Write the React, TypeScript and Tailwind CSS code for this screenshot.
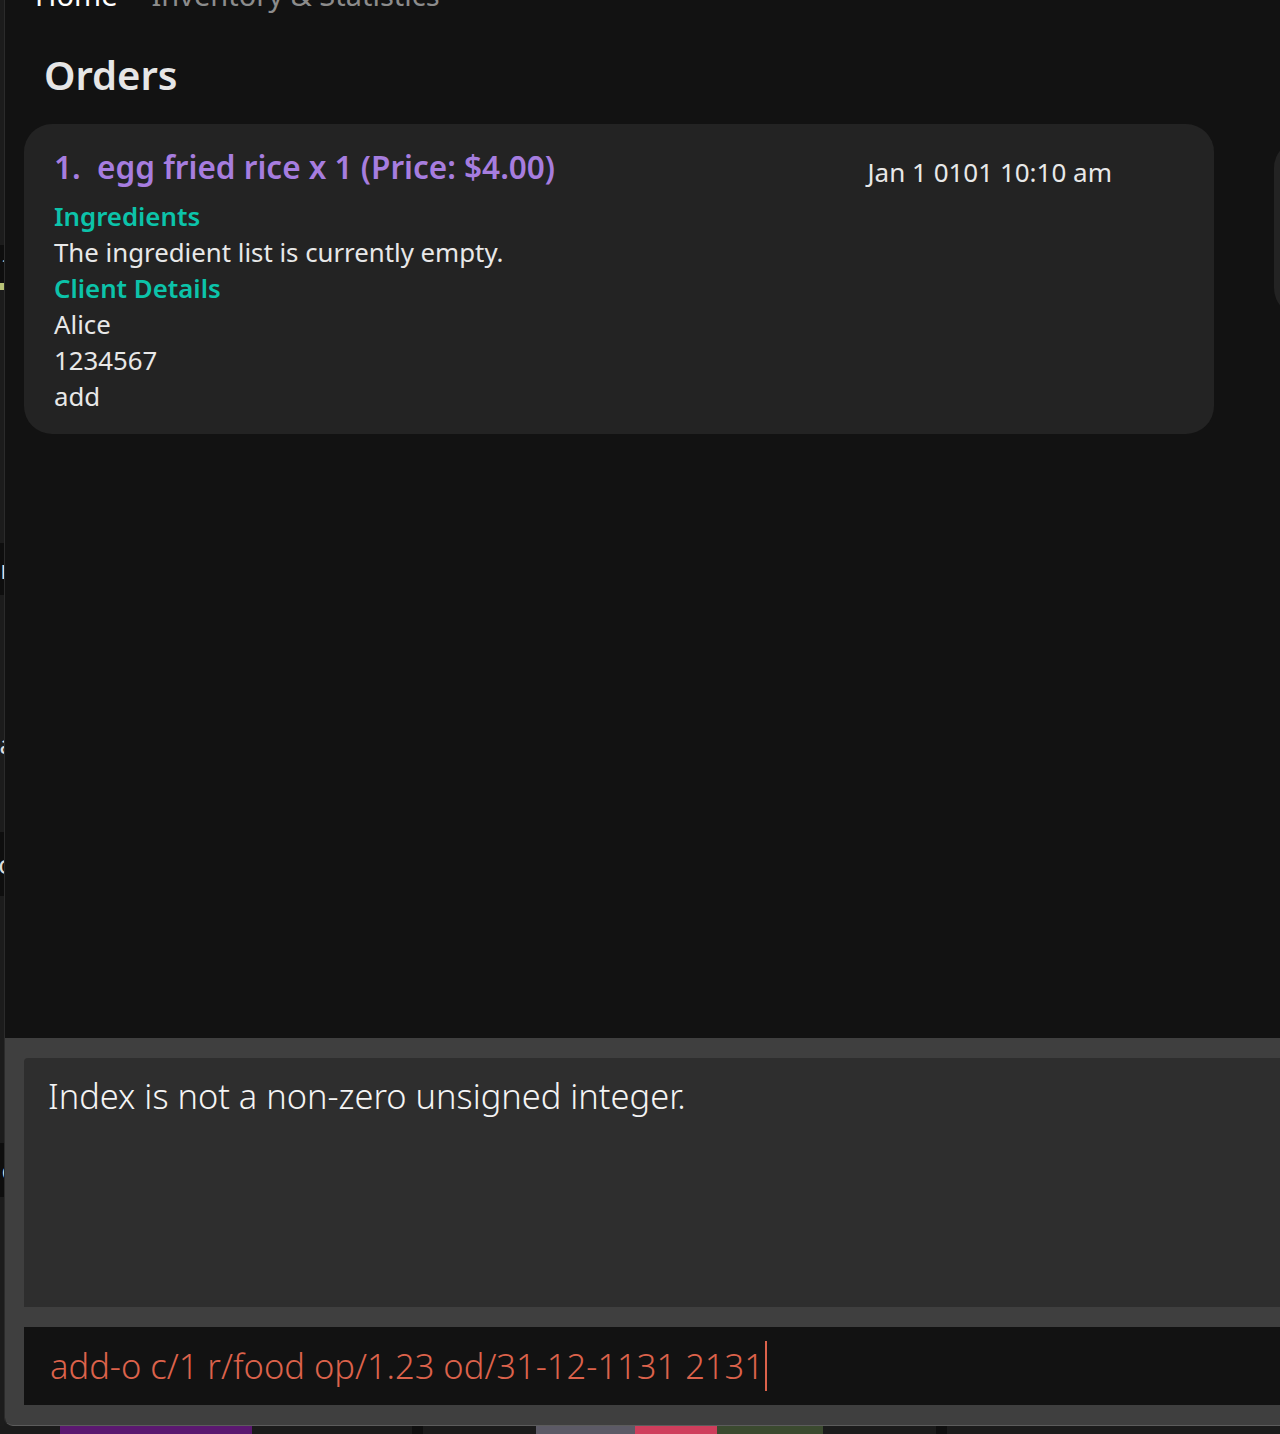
import React from "react";

const font = { fontFamily: '"Noto Sans", "Open Sans", sans-serif' };

function LeftStrip() {
  return (
    <div className="w-[4px] shrink-0 flex flex-col bg-[#1c1c1c] overflow-hidden text-[26px] leading-none text-[#dddddd]">
      <div className="h-[245px]" />
      <div className="h-[38px] bg-[#0e0e0e] flex items-center justify-end">
        <span className="-mr-[8px]">t</span>
      </div>
      <div className="h-[7px] bg-[#b7c176]" />
      <div className="h-[253px]" />
      <div className="h-[52px] bg-[#0e0e0e] flex items-center justify-end">
        <span className="-mr-[7px]">r</span>
      </div>
      <div className="h-[138px]" />
      <div className="h-[22px] flex items-center justify-end">
        <span className="-mr-[10px]">a</span>
      </div>
      <div className="h-[77px]" />
      <div className="h-[64px] bg-[#0e0e0e] flex items-center justify-end">
        <span className="-mr-[10px]">o</span>
      </div>
      <div className="h-[247px]" />
      <div className="h-[54px] bg-[#0e0e0e] flex items-center justify-end">
        <span className="-mr-[10px]">c</span>
      </div>
    </div>
  );
}

function OrderCard() {
  return (
    <div className="w-[1190px] shrink-0 rounded-[28px] bg-[#232323] pl-[30px] pr-[102px] pt-[21px] pb-[20px]">
      <div className="flex items-start justify-between">
        <div className="text-[31.5px] leading-[44px] font-semibold text-[#a67ddf] whitespace-pre">
          {"1.  egg fried rice x 1 (Price: $4.00)"}
        </div>
        <div className="text-[26px] leading-[36px] text-[#e8e8e8] mt-[9px]">
          Jan 1 0101 10:10 am
        </div>
      </div>
      <div className="text-[25.8px] leading-[36px] text-[#e8e8e8] mt-[8px]">
        <div className="font-semibold text-[#0cc3aa]">Ingredients</div>
        <div>The ingredient list is currently empty.</div>
        <div className="font-semibold text-[#0cc3aa]">Client Details</div>
        <div>Alice</div>
        <div>1234567</div>
        <div>add</div>
      </div>
    </div>
  );
}

function Window() {
  return (
    <div className="flex-1 min-w-0 flex flex-col bg-[#121212] border-l border-[#2b2b2b] overflow-hidden rounded-bl-[8px]">
      {/* Tabs (scrolled off the top) */}
      <div className="flex h-[29px] -mt-[20px] pl-[30px] gap-[34px] text-[29px] leading-none">
        <span className="text-white">Home</span>
        <span className="text-[#8c8c8c]">Inventory &amp; Statistics</span>
      </div>

      <div className="pl-[39px] pt-[42px] text-[40px] leading-[48px] font-semibold text-[#e6e6e6]">
        Orders
      </div>

      <div className="flex items-start gap-[60px] pl-[19px] pt-[25px]">
        <OrderCard />
        <div className="w-[60px] h-[176px] mt-[16px] shrink-0 rounded-[28px] bg-[#232323]" />
      </div>

      <div className="flex-1" />

      {/* Bottom command panel */}
      <div className="h-[388px] shrink-0 bg-[#3f3f3f] border-b border-[#5c5c5c] pl-[19px] pt-[20px] pb-[19px] flex flex-col gap-[20px] rounded-bl-[8px]">
        <div className="h-[249px] bg-[#2e2e2e] rounded-tl-[4px] pl-[24px] pt-[14px] text-[34.4px] leading-[48px] font-light text-[#f4f4f4]">
          Index is not a non-zero unsigned integer.
        </div>
        <div className="h-[78px] bg-[#121212] pl-[26px] flex items-center text-[34.5px] font-light text-[#dc624b]">
          <span className="whitespace-pre leading-none">add-o c/1 r/food op/1.23 od/31-12-1131 2131</span>
          <span className="w-[2px] h-[50px] bg-[#dc624b] ml-[1px]" />
        </div>
      </div>
    </div>
  );
}

function DesktopStrip() {
  return (
    <div className="h-[8px] flex bg-[#1b1b1b]">
      <div className="w-[60px]" />
      <div className="w-[192px] bg-[#5b1870]" />
      <div className="w-[160px]" />
      <div className="w-[11px] bg-[#0f0f0f]" />
      <div className="w-[113px]" />
      <div className="w-[99px] bg-[#5c5a66]" />
      <div className="w-[82px] bg-[#cf3e5c]" />
      <div className="w-[106px] bg-[#3b4a2f]" />
      <div className="w-[113px]" />
      <div className="w-[11px] bg-[#0f0f0f]" />
    </div>
  );
}

export default function App() {
  return (
    <div style={font} className="w-[1280px] h-[1434px] flex flex-col bg-[#1b1b1b] overflow-hidden">
      <div className="h-[1426px] flex">
        <LeftStrip />
        <Window />
      </div>
      <DesktopStrip />
    </div>
  );
}
